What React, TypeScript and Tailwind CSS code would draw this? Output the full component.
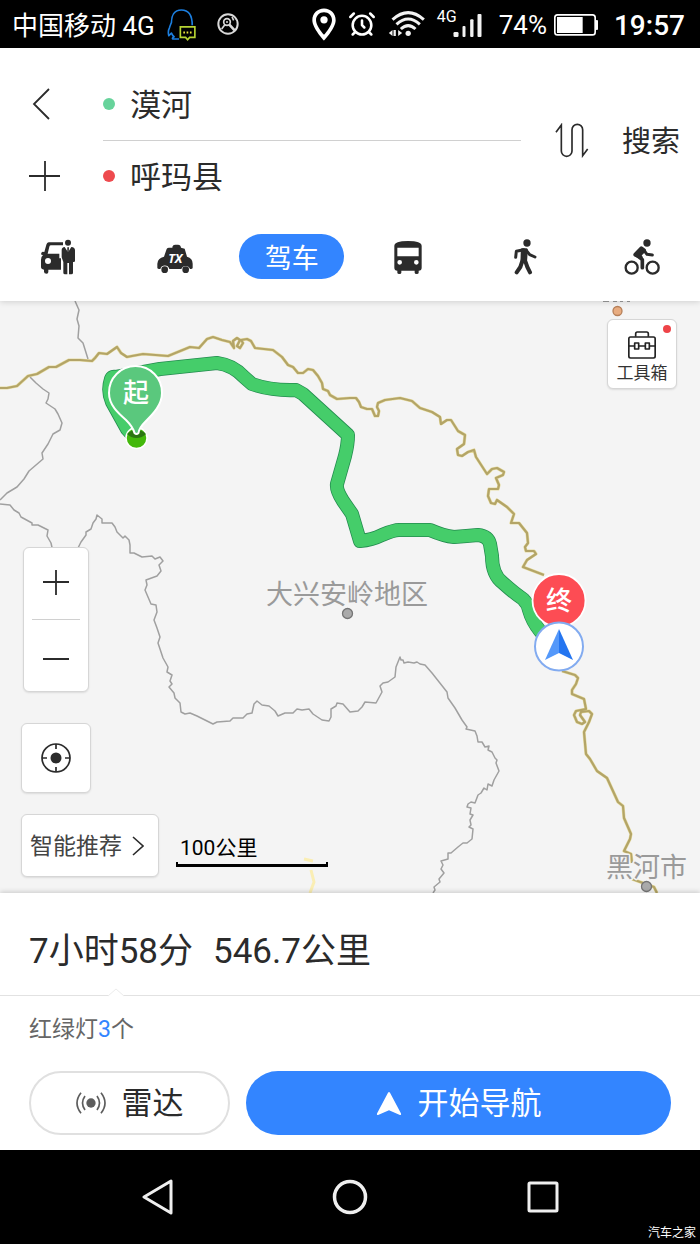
import type { ReactNode } from "react";
import { AlarmClock } from "lucide-react";

const INK = "#2b2b2b";

function QqIcon() {
  return (
    <svg viewBox="0 0 90 100" className="h-[33px] w-[30px]" fill="none" strokeWidth="5" aria-hidden="true">
      <path
        d="M76 52C76 24 66 6 43 6C21 6 13 24 13 44C10 51 8 56 7 60C3 67 3 76 5 84L13 76C15 82 18 85 21 87C16 90 15 93 17 94H36"
        stroke="#1c7fe0"
        strokeLinejoin="round"
      />
      <path d="M40 57H84V89H68L62 96L56 89H40Z" stroke="#b7d433" fill="#000" />
      <path d="M49 74H54M59 74H64M69 74H74" stroke="#e8e23a" strokeWidth="6" />
    </svg>
  );
}

function NoSearchIcon() {
  return (
    <svg viewBox="0 0 66 66" className="size-[22px]" fill="none" stroke="#d9d9d9" strokeWidth="6" aria-hidden="true">
      <circle cx="33" cy="33" r="29" />
      <circle cx="30" cy="27" r="10" strokeWidth="5" />
      <circle cx="30" cy="27" r="2" strokeWidth="3" />
      <path d="M37 35L53 52" strokeWidth="8" />
      <path d="M23 36L14 48M45 12L50 22" strokeWidth="5" />
    </svg>
  );
}

function PinIcon() {
  return (
    <svg viewBox="0 0 72 98" className="h-[33px] w-[24px]" aria-hidden="true">
      <path
        fill="#fff"
        fillRule="evenodd"
        d="M36 1C16 1 1 16 1 36C1 60 36 97 36 97C36 97 71 60 71 36C71 16 56 1 36 1ZM36 12C50 12 60 22 60 36C60 49 45 70 36 80C27 70 12 49 12 36C12 22 22 12 36 12Z"
      />
      <circle cx="36" cy="35" r="11" fill="#fff" />
    </svg>
  );
}

function WifiIcon() {
  return (
    <svg viewBox="0 0 110 78" className="h-[26px] w-[37px]" fill="none" stroke="#f2f2f2" strokeWidth="9" aria-hidden="true">
      <path d="M13 26Q60 -16 107 26" />
      <path d="M25 40Q60 8 95 40" />
      <path d="M38 54Q60 34 82 54" />
      <circle cx="60" cy="67" r="8" fill="#f2f2f2" stroke="none" />
      <path d="M2 66L13 57V75ZM16 57H23V75H16ZM30 57L42 66L30 75Z" fill="#f2f2f2" stroke="none" />
    </svg>
  );
}

function SignalIcon() {
  return (
    <span className="flex items-start">
      <span className="text-[16px] leading-[14px]">4G</span>
      <svg viewBox="0 0 86 72" className="-ml-1 mt-1 h-[24px] w-[29px]" fill="#f2f2f2" aria-hidden="true">
        <rect x="1" y="54" width="15" height="15" rx="4" />
        <rect x="28" y="36" width="9" height="33" rx="3" />
        <rect x="51" y="16" width="10" height="53" rx="3" />
        <rect x="73" y="0" width="12" height="69" rx="3" />
      </svg>
    </span>
  );
}

function BatteryIcon() {
  return (
    <svg viewBox="0 0 132 66" className="h-[22px] w-[44px]" aria-hidden="true">
      <rect x="2.5" y="2.5" width="121" height="60" rx="8" fill="none" stroke="#fff" strokeWidth="5" />
      <rect x="9" y="9" width="77" height="48" fill="#fff" />
      <rect x="125" y="18" width="7" height="30" rx="3" fill="#fff" />
    </svg>
  );
}

function StatusBar() {
  return (
    <div className="flex h-12 items-center bg-black pl-3 pr-[15px] text-[26px] leading-none text-white">
      <span className="whitespace-nowrap pt-1">中国移动 4G</span>
      <span className="ml-3 flex items-center gap-5">
        <QqIcon />
        <NoSearchIcon />
      </span>
      <span className="ml-auto flex items-center gap-3">
        <PinIcon />
        <AlarmClock className="size-[28px]" strokeWidth={2.2} />
        <WifiIcon />
        <SignalIcon />
      </span>
      <span className="ml-[17px] flex items-center gap-[7px] pt-0.5">
        74%
        <BatteryIcon />
      </span>
      <span className="ml-4 pt-1 text-[28px] font-medium">19:57</span>
    </div>
  );
}

function CarPersonIcon() {
  return (
    <svg viewBox="0 0 108 108" className="size-9" fill={INK} aria-hidden="true">
      <path
        fillRule="evenodd"
        d="M27 10H69V19H33Q29 19 28 23L23 44H58V58H63V92H25V99Q25 104 20 104Q12 104 12 98V92Q3 91 3 84V62Q3 53 9 48L4 47Q2 40 8 38L13 39L18 21Q20 11 27 10ZM24 57A9 9 0 1 0 24 75A9 9 0 1 0 24 57Z"
      />
      <circle cx="84" cy="11" r="9" />
      <path d="M74 24L84 40L94 24Q105 25 105 34V66Q105 69 101 69H99V101Q99 106 94 106H87V72H82V106H75Q70 106 70 101V69L65 55V33Q65 25 74 24Z" />
      <path d="M82 25H87L86 39L84 42L82 39Z" />
    </svg>
  );
}

function TaxiIcon() {
  return (
    <svg viewBox="0 0 108 108" className="size-9" fill={INK} aria-hidden="true">
      <path d="M46 26Q46 17 55 17H63Q71 17 72 26L83 29L90 53Q107 57 107 74V86Q107 90 101 90H99A14 14 0 0 0 73 90H37A14 14 0 0 0 10 90H7Q1 90 1 86V74Q2 57 21 53L29 30Q31 26 36 26Z" />
      <circle cx="23" cy="92" r="10" />
      <circle cx="86" cy="92" r="10" />
      <text x="55" y="71" textAnchor="middle" fill="#fff" fontSize="38" fontWeight="700" fontStyle="italic" fontFamily="Open Sans, sans-serif">
        TX
      </text>
    </svg>
  );
}

function BusIcon() {
  return (
    <svg viewBox="0 0 108 108" className="size-9" fill={INK} aria-hidden="true">
      <path
        fillRule="evenodd"
        d="M13 21Q13 6 54 6Q95 6 95 21V86Q95 95 86 95V101Q86 105 80 105Q74 105 74 101V95H34V101Q34 105 28 105Q22 105 22 101V95Q13 95 13 86ZM22 26V52H86V26ZM29 63A7 7 0 1 0 29 77A7 7 0 1 0 29 63ZM79 63A7 7 0 1 0 79 77A7 7 0 1 0 79 63Z"
      />
    </svg>
  );
}

function WalkIcon() {
  return (
    <svg viewBox="0 0 108 108" className="size-9" fill="none" stroke={INK} strokeLinecap="round" strokeLinejoin="round" aria-hidden="true">
      <circle cx="60" cy="12" r="11" fill={INK} stroke="none" />
      <path d="M26 55L28 37L50 32M58 34L68 47L84 54" strokeWidth="9" />
      <path d="M46 32L58 32L56 62L45 62Z" fill={INK} strokeWidth="9" />
      <path d="M46 66L40 84L29 100M54 64L61 84L69 100" strokeWidth="12" />
    </svg>
  );
}

function BikeIcon() {
  return (
    <svg viewBox="0 0 108 108" className="size-9" fill="none" stroke={INK} strokeLinecap="round" strokeLinejoin="round" aria-hidden="true">
      <circle cx="69" cy="12" r="11" fill={INK} stroke="none" />
      <circle cx="23" cy="86" r="18" strokeWidth="7" />
      <circle cx="86" cy="86" r="18" strokeWidth="7" />
      <path d="M52 28L60 34L45 49L50 55L34 47Z" fill={INK} strokeWidth="12" />
      <path d="M60 34L69 46L85 48" strokeWidth="9" />
      <path d="M40 50L55 62V86" strokeWidth="11" />
    </svg>
  );
}

function PlaceField({ id, label, value, dot }: { id: string; label: string; value: string; dot: string }) {
  return (
    <div className="flex h-[72px] items-center gap-[15px]">
      <label htmlFor={id} className="flex" aria-label={label}>
        <span className={"size-3 rounded-full " + dot} />
      </label>
      <input id={id} defaultValue={value} className="w-full min-w-0 bg-transparent pt-1 text-[31px] leading-10 text-[#2b2b2b] outline-none" />
    </div>
  );
}

function ModeButton({ label, children }: { label: string; children: ReactNode }) {
  return (
    <button type="button" aria-label={label} className="flex h-[45px] items-center justify-center">
      {children}
    </button>
  );
}

function SearchHeader() {
  return (
    <header className="relative z-10 bg-white pb-[22px] pt-5 shadow-[0_1px_6px_rgba(0,0,0,0.15)]">
      <div className="flex items-center">
        <div className="w-[103px] shrink-0 pl-[29px]">
          <button type="button" aria-label="返回" className="flex h-[72px] w-8 items-center">
            <svg viewBox="0 0 32 32" className="size-8" fill="none" stroke={INK} strokeWidth="1.8" aria-hidden="true">
              <path d="M20 1L5 16L20 31" />
            </svg>
          </button>
          <button type="button" aria-label="添加途经点" className="flex h-[72px] w-8 items-center">
            <svg viewBox="0 0 32 32" className="size-8" fill="none" stroke={INK} strokeWidth="1.8" aria-hidden="true">
              <path d="M0 16H31M16 1V31" />
            </svg>
          </button>
        </div>
        <div className="min-w-0 flex-1">
          <PlaceField id="origin" label="起点" value="漠河" dot="bg-[#67d39b]" />
          <div className="-mb-px h-px bg-[#d0d0d0]" />
          <PlaceField id="destination" label="终点" value="呼玛县" dot="bg-[#ee4a4e]" />
        </div>
        <button type="button" aria-label="交换起终点" className="ml-[34px]">
          <svg viewBox="0 0 102 105" className="h-[35px] w-[34px]" fill="none" stroke={INK} strokeWidth="5" aria-hidden="true">
            <path d="M3 28L19 6V84A16 16 0 0 0 51 84V20A16 16 0 0 1 83 20V98L98 78" />
          </svg>
        </button>
        <button type="button" className="ml-[33px] mr-5 whitespace-nowrap pt-1 text-[29px] leading-10 text-[#2b2b2b]">
          搜索
        </button>
      </div>
      <nav className="mt-[22px] grid grid-cols-6" aria-label="出行方式">
        <ModeButton label="打车"><CarPersonIcon /></ModeButton>
        <ModeButton label="出租车"><TaxiIcon /></ModeButton>
        <button type="button" aria-current="true" className="mx-auto flex h-[45px] w-[105px] items-center justify-center rounded-full bg-[#3385ff] pt-1 text-[27px] leading-10 text-white">
          驾车
        </button>
        <ModeButton label="公交"><BusIcon /></ModeButton>
        <ModeButton label="步行"><WalkIcon /></ModeButton>
        <ModeButton label="骑行"><BikeIcon /></ModeButton>
      </nav>
    </header>
  );
}

const borders = [
  "M75 301L79 310L77 319L79 326L78 338L83 343L88 359",
  "M30 377L36 383L43 389L49 393L48 399L46 403L55 409L58 414L62 423L60 430L53 434L48 444L42 453L43 459L29 471L24 479L17 487L7 493L0 500",
  "M0 504L10 505L14 510L19 513L21 517L32 523V525L38 525L48 530L47 536L51 543L53 552",
  "M76 552L81 542L86 535V532L91 529L93 523L96 519L97 515L102 519V523L112 523L115 527L117 532L121 536L123 538L125 536L129 540L130 545V553L134 553L142 557L152 556L155 559L160 557L163 561L159 565L161 571L157 576L146 580L147 585L145 590L151 604L156 605L157 612L154 620L157 628L160 637L158 643L163 658L168 667L167 672L172 675L170 681L172 684L169 687L174 693L175 698L180 703L181 712L185 714L190 713L197 716L213 724L217 722L230 721L233 718H243L247 714L252 713L254 704L257 701L262 705L269 706L275 711L278 716L285 713L293 713L297 709L302 710L309 709L313 714L322 720L329 721L331 717V709L336 706L337 703L343 704L350 712L358 711L362 707L365 702L376 703L382 692L380 686L383 683L388 682L395 677L396 667L400 657L401 660H403L404 663L408 662L414 663L417 662L420 664L425 665L432 673L447 692L448 698L455 708L462 720L467 727L466 729L475 731L477 736L478 742L482 742L485 747L489 746L488 750L492 752L495 758L497 760L496 763L499 771L494 780L492 786L488 784L487 790L484 788L481 793L478 795L475 803L471 802L468 804L467 807L471 808L470 814L473 815L470 820L471 825L469 827L473 829L472 839L467 843L463 843L458 847L451 853H448L448 859L441 861L443 865L441 869L444 873L439 879L440 882L434 887L435 890L433 893",
];

const roads = [
  "M0 388H7L17 386L28 376L37 374L49 367L56 367L69 360L80 360L92 361L95 358L99 353L107 354L117 347L121 353L127 357L132 356L143 354L168 356L190 347L199 348L207 339L213 337L222 340L230 342L234 348L233 341L237 338L240 340L237 346L240 348L243 343L241 340L247 339L251 341L255 348L273 350L282 357L288 365L293 367L298 373H303L308 369L313 370L318 376L322 383L323 389L328 391L330 395L337 399L350 398H356L359 402L361 407L367 409H372L375 416H378L379 411L377 407L378 403L385 400L400 398L412 401L420 408L432 412L440 417L441 424L447 420H451L458 431L465 435L464 444L457 449L458 455L462 456L468 452L474 450L476 457L487 474L492 469L497 468L504 472L503 475L496 478L499 485L498 489H489L488 496L491 503L495 504L497 500L507 507L514 514L511 523H519L527 533L528 543L525 547L526 551H534L536 554L527 560L523 567L544 575",
  "M562 671L575 675L578 678L576 684L572 690V694L584 699L586 709L576 711L574 715L577 722L582 724L585 722L580 715L581 712L589 711L592 714L589 722L584 732L586 754L590 759L597 771L607 778L618 802L623 806L624 818L631 834L630 839L624 851L631 854L632 863",
  "M632 879L643 883L654 887L657 893",
];

const route =
  "M137 440L127 429L112 402Q107 391 111 379Q112 376 116 377L160 369L217 363Q233 365 244 377L252 384Q272 391 296 390L303 394L348 435Q348 444 345 456L337 484Q336 490 343 501L352 514L360 541Q372 540 382 535Q394 530 399 530L430 530Q444 536 454 537Q467 536 478 535Q488 536 490 544L492 556Q492 575 503 583Q514 593 523 599Q528 604 529 610Q532 621 540 631L552 642";

function MapCanvas() {
  return (
    <svg
      viewBox="0 301 700 592"
      preserveAspectRatio="xMidYMid slice"
      className="absolute inset-0 size-full"
      fill="none"
      strokeLinejoin="round"
      role="img"
      aria-label="漠河到呼玛县路线图"
    >
      {borders.map((d) => (
        <path key={d} d={d} stroke="#a0a0a0" strokeWidth="1.5" />
      ))}
      {roads.map((d) => (
        <g key={d}>
          <path d={d} stroke="#e6dca0" strokeWidth="3.2" />
          <path d={d} stroke="#b3a467" strokeWidth="2.2" />
        </g>
      ))}
      <path d="M304 859L313 861M311 870L314 882L310 893" stroke="#faeeb4" strokeWidth="3" />

      <g fill="#9a9a9a" stroke="#f4f4f4" strokeWidth="3" paintOrder="stroke" fontSize="27">
        <text x="266" y="604">大兴安岭地区</text>
        <text x="606" y="877">黑河市</text>
      </g>
      <path d="M603 301L609 301M613 301H617M620 301H623M627 301H630" stroke="#999" strokeWidth="2" />
      <g strokeWidth="1.3">
        <circle cx="347.5" cy="613.5" r="5" fill="#aaa" stroke="#757575" />
        <circle cx="646.5" cy="886.5" r="5" fill="#aaa" stroke="#757575" />
        <circle cx="617.5" cy="311" r="4.5" fill="#e8ac80" stroke="#b67f58" />
      </g>

      <path d={route} stroke="#228b4e" strokeWidth="14" />
      <path d={route} stroke="#45cd6a" strokeWidth="12.5" />

      <circle cx="136.500" cy="438" r="10.5" fill="#43b80b" stroke="#fff" strokeWidth="1.5" />
      <path d="M127 434Q131 430 136.5 430Q142 430 146 434Q142 438 136.5 438Q131 438 127 434Z" fill="#2b7612" />
      <path
        d="M135.5 366A26.5 26.5 0 0 1 162 393C162 405 153 414 146 421Q139 428 138.5 433Q136.5 435 134.5 433Q133 427 126 420C118 413 109 405 109 393A26.5 26.5 0 0 1 135.5 366Z"
        fill="#5ac87d"
        stroke="#fff"
        strokeWidth="2"
      />
      <text x="136" y="402" textAnchor="middle" fontSize="26" fontWeight="500" fill="#fff">起</text>

      <circle cx="559" cy="600.5" r="26.5" fill="#fd4c54" stroke="#fff" strokeWidth="1.8" />
      <text x="559" y="610" textAnchor="middle" fontSize="26" fontWeight="500" fill="#fff">终</text>
      <circle cx="559" cy="646.5" r="24" fill="#fff" stroke="#82abf0" strokeWidth="2" />
      <path d="M559 629L545 660L559 653Z" fill="#5498fa" />
      <path d="M559 629L573 660L559 653Z" fill="#2475f0" />
    </svg>
  );
}

function MapView() {
  const card = "rounded-md border border-[#d6d6d6] bg-white shadow-[0_1px_2px_rgba(0,0,0,0.1)]";
  return (
    <main className="relative min-h-[560px] flex-1 overflow-hidden bg-[#f4f4f4]">
      <MapCanvas />
      <button type="button" className={"absolute right-[23px] top-[18px] flex size-[70px] flex-col items-center pt-[11px] " + card}>
        <svg viewBox="0 0 84 84" className="size-7" fill="none" stroke="#222" strokeWidth="5" strokeLinejoin="round" aria-hidden="true">
          <rect x="2.5" y="18" width="79" height="63" rx="5" />
          <path d="M23 17V9Q23 3 28 3H56Q61 3 61 9V17M3 45H20M32 45H52M64 45H81" />
          <rect x="20" y="36" width="12" height="18" />
          <rect x="52" y="36" width="12" height="18" />
        </svg>
        <span className="mt-0.5 whitespace-nowrap text-[17px] leading-6 text-[#333]">工具箱</span>
        <span className="absolute right-[5px] top-[5px] size-2 rounded-full bg-[#ee4448]" />
      </button>

      <div className="absolute bottom-4 left-[21px] flex flex-col items-start">
        <div className={"ml-0.5 flex h-[145px] w-[66px] flex-col items-center " + card}>
          <button type="button" aria-label="放大" className="flex w-full flex-1 items-center justify-center">
            <svg viewBox="0 0 28 28" className="size-7" stroke={INK} strokeWidth="1.8" aria-hidden="true">
              <path d="M1 12H27M14 -1V25" />
            </svg>
          </button>
          <span className="h-px w-12 bg-[#d0d0d0]" />
          <button type="button" aria-label="缩小" className="flex w-full flex-1 items-center justify-center">
            <svg viewBox="0 0 28 28" className="size-7" stroke={INK} strokeWidth="2" aria-hidden="true">
              <path d="M1 17H27" />
            </svg>
          </button>
        </div>
        <button type="button" aria-label="定位" className={"mt-[31px] flex size-[70px] items-center justify-center " + card}>
          <svg viewBox="0 0 30 30" className="size-[30px]" fill="none" stroke={INK} strokeWidth="1.7" aria-hidden="true">
            <circle cx="15" cy="15" r="14" />
            <circle cx="15" cy="15" r="5.5" fill={INK} stroke="none" />
            <path d="M15 1V6M15 24V29M1 15H6M24 15H29" />
          </svg>
        </button>
        <div className="mt-[21px] flex items-end gap-[17px]">
          <button type="button" className={"flex h-[63px] w-[138px] items-center gap-2.5 whitespace-nowrap pl-2 text-[23px] leading-8 text-[#444] " + card}>
            <span className="pt-0.5">智能推荐</span>
            <svg viewBox="0 0 12 20" className="h-5 w-3" fill="none" stroke={INK} strokeWidth="1.6" aria-hidden="true">
              <path d="M1 1L11 10L1 19" />
            </svg>
          </button>
          <div className="mb-2.5 w-[152px]">
            <div className="pl-1 text-[21px] leading-7 text-black">100公里</div>
            <div className="h-[5px] border-x-2 border-b-3 border-black" />
          </div>
        </div>
      </div>
    </main>
  );
}

function RoutePanel() {
  return (
    <section className="relative z-10 bg-white pb-[15px] shadow-[0_-1px_5px_rgba(0,0,0,0.18)]">
      <h1 className="flex gap-5 px-[29px] pb-[18px] pt-[34px] text-[35px] leading-[50px] text-[#2b2b2b]">
        <span>7小时58分</span>
        <span>546.7公里</span>
      </h1>
      <div className="relative h-px bg-[#e2e2e2]">
        <svg viewBox="0 0 18 9" className="absolute bottom-[-1px] left-[107px] h-[9px] w-[18px]" aria-hidden="true">
          <path d="M0 9L9 1L18 9Z" fill="#fff" />
          <path d="M1 8L9 1L17 8" fill="none" stroke="#ececec" />
        </svg>
      </div>
      <p className="px-[29px] pb-[25px] pt-[18px] text-[23px] leading-8 text-[#666]">
        红绿灯<span className="text-[#3385ff]">3</span>个
      </p>
      <div className="flex gap-4 px-[29px] text-[31px] leading-10">
        <button type="button" className="flex h-16 w-[201px] shrink-0 items-center justify-center gap-4 rounded-full border-2 border-[#e0e0e0] bg-white text-[#2b2b2b]">
          <svg viewBox="0 0 90 66" className="h-[22px] w-[30px]" fill="none" stroke="#5d5d5d" strokeWidth="5" aria-hidden="true">
            <circle cx="45" cy="33" r="14" fill="#5d5d5d" stroke="none" />
            <path d="M15 2Q-9 33 15 64M27 12Q12 33 27 54M63 12Q78 33 63 54M75 2Q99 33 75 64" />
          </svg>
          <span className="pt-0.5">雷达</span>
        </button>
        <button type="button" className="flex h-16 flex-1 items-center justify-center gap-4 rounded-full bg-[#3385ff] text-white">
          <svg viewBox="0 0 78 74" className="h-[25px] w-[26px]" fill="#fff" aria-hidden="true">
            <path d="M36 5Q39 0 42 5L75 67Q77 73 70 71L39 57L8 71Q1 73 3 67Z" />
          </svg>
          <span className="pt-0.5">开始导航</span>
        </button>
      </div>
    </section>
  );
}

function SystemNav() {
  return (
    <footer className="relative z-10 flex h-[94px] items-center justify-center gap-[159px] bg-black">
      <button type="button" aria-label="返回">
        <svg viewBox="0 0 32 36" className="h-9 w-8" fill="none" stroke="#efefef" strokeWidth="3" strokeLinejoin="round" aria-hidden="true">
          <path d="M30 2V34L3 18Z" />
        </svg>
      </button>
      <button type="button" aria-label="主屏幕">
        <svg viewBox="0 0 36 36" className="size-9" fill="none" stroke="#efefef" strokeWidth="3.5" aria-hidden="true">
          <circle cx="18" cy="18" r="15.5" />
        </svg>
      </button>
      <button type="button" aria-label="最近任务">
        <svg viewBox="0 0 32 32" className="size-8" fill="none" stroke="#efefef" strokeWidth="3" aria-hidden="true">
          <rect x="2" y="2" width="28" height="28" rx="1" />
        </svg>
      </button>
      <span className="absolute bottom-0.5 right-1 text-xs leading-[18px] text-white">汽车之家</span>
    </footer>
  );
}

export default function App() {
  return (
    <div className="flex min-h-screen flex-col bg-white font-['Roboto','Noto_Sans_CJK_SC',sans-serif]" lang="zh-CN">
      <StatusBar />
      <SearchHeader />
      <MapView />
      <RoutePanel />
      <SystemNav />
    </div>
  );
}
